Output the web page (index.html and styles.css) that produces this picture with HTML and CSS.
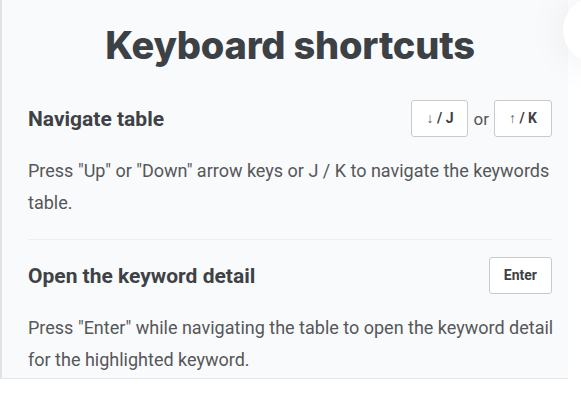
FILE: index.html
```html
<!DOCTYPE html>
<html lang="en">
<head>
  <meta charset="UTF-8">
  <title>Keyboard shortcuts</title>
  <meta name="viewport" content="width=device-width, initial-scale=1">
  <link rel="stylesheet" href="styles.css">
</head>
<body>
  <div class="page">
    <div class="close"></div>

    <div class="panel">
      <h1>Keyboard shortcuts</h1>

      <div class="section">
        <div class="row">
          <h2>Navigate table</h2>
          <div class="keys">
            <kbd><span class="arrow">↓</span> / J</kbd>
            <span class="or">or</span>
            <kbd><span class="arrow">↑</span> / K</kbd>
          </div>
        </div>
        <p>Press "Up" or "Down" arrow keys or J / K to navigate the keywords table.</p>
      </div>

      <div class="section">
        <div class="row">
          <h2>Open the keyword detail</h2>
          <div class="keys">
            <kbd>Enter</kbd>
          </div>
        </div>
        <p>Press "Enter" while navigating the table to open the keyword detail for the highlighted keyword.</p>
      </div>
    </div>
  </div>
</body>
</html>
```

FILE: styles.css
```css
body { margin:0; background:#fff; font-family:Roboto, "Liberation Sans", sans-serif; }

.page { position:relative; width:581px; height:420px; overflow:hidden; }

.panel { width:524px; background:#f9fafc; border-left:2px solid #e2e3e5; border-bottom:1px solid #e6e7e9; padding:0 16px 0 26px; }

h1 { margin:0; padding:22px 0 0; height:100px; box-sizing:border-box; text-align:center; font-family:Inter, sans-serif; font-weight:800; font-size:38px; letter-spacing:-0.2px; color:#3c4146; }

.section + .section { border-top:1px solid #eceef1; margin-top:20px; padding-top:17px; }

.row { display:flex; justify-content:space-between; align-items:center; height:37px; }
h2 { margin:0; font-size:21px; font-weight:700; color:#3e4145; }

.keys { display:flex; align-items:center; gap:5px; }
kbd { display:inline-block; background:#fff; border:1px solid #c9cacc; border-radius:3px; padding:0 14px; height:35px; line-height:35px; font-family:Roboto, sans-serif; font-size:14px; font-weight:700; color:#3e4145; }
.arrow { font-weight:400; color:#666; }
.or { font-size:17px; color:#555; }

p { margin:18px -8px 0 0; font-size:18px; line-height:32px; color:#555759; }
.section:last-child p { margin-bottom:2px; }

.close { position:absolute; left:563px; top:-3px; width:66px; height:66px; border-radius:50%; background:#fff; box-shadow:0 0 40px rgba(0,0,0,0.07); z-index:2; }
```
